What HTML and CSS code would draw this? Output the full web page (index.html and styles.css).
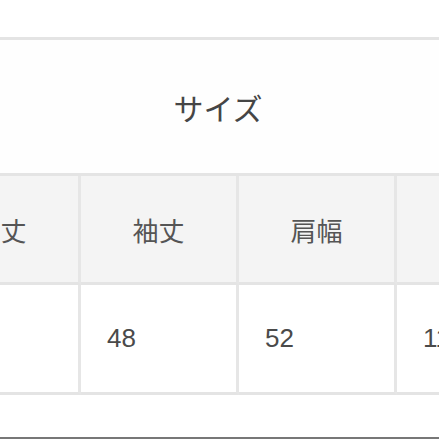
FILE: index.html
```html
<!DOCTYPE html>
<html lang="ja">
<head>
<meta charset="utf-8">
<link rel="stylesheet" href="styles.css">
</head>
<body>
<div class="page">
  <div class="spacer"></div>
  <table class="size-table">
    <colgroup>
      <col class="col"><col class="col"><col class="col"><col class="col">
    </colgroup>
    <tr class="title-row">
      <td class="title" colspan="4">サイズ</td>
    </tr>
    <tr class="head-row">
      <td>着丈</td>
      <td>袖丈</td>
      <td>肩幅</td>
      <td>身幅</td>
    </tr>
    <tr class="data-row">
      <td>70</td>
      <td>48</td>
      <td>52</td>
      <td>110</td>
    </tr>
  </table>
  <div class="filler"></div>
  <div class="bottom-line"></div>
</div>
</body>
</html>
```

FILE: styles.css
```css
html, body {
  margin: 0;
  padding: 0;
  background: #ffffff;
}
.page {
  width: 439px;
  height: 439px;
  overflow: hidden;
  display: flex;
  flex-direction: column;
}
.spacer {
  height: 37px;
  flex: none;
}
.size-table {
  flex: none;
  margin-left: -77px;
  width: 632px;
  table-layout: fixed;
  border-collapse: separate;
  border-spacing: 0;
  border-top: 3px solid #e4e4e4;
}
.col {
  width: 158px;
}
.size-table td {
  padding: 0;
  border-bottom: 3px solid #e4e4e4;
  vertical-align: middle;
}
.title-row .title {
  height: 133px;
  text-align: center;
  padding-right: 42px;
  font-family: "Noto Sans CJK JP", sans-serif;
  font-size: 30px;
  color: #454545;
  background: #fefefe;
}
.head-row td {
  height: 106px;
  background: #f4f4f4;
  border-right: 3px solid #e6e6e6;
  text-align: center;
  font-family: "Noto Sans CJK JP", sans-serif;
  font-size: 26px;
  color: #555555;
}
.data-row td {
  height: 107px;
  background: #ffffff;
  border-right: 3px solid #e6e6e6;
  text-align: left;
  padding-left: 26px;
  font-family: "Liberation Sans", Arial, sans-serif;
  font-size: 26px;
  color: #4a4a4a;
}
.filler {
  flex: 1;
}
.bottom-line {
  flex: none;
  height: 2px;
  background: #777777;
}
```
